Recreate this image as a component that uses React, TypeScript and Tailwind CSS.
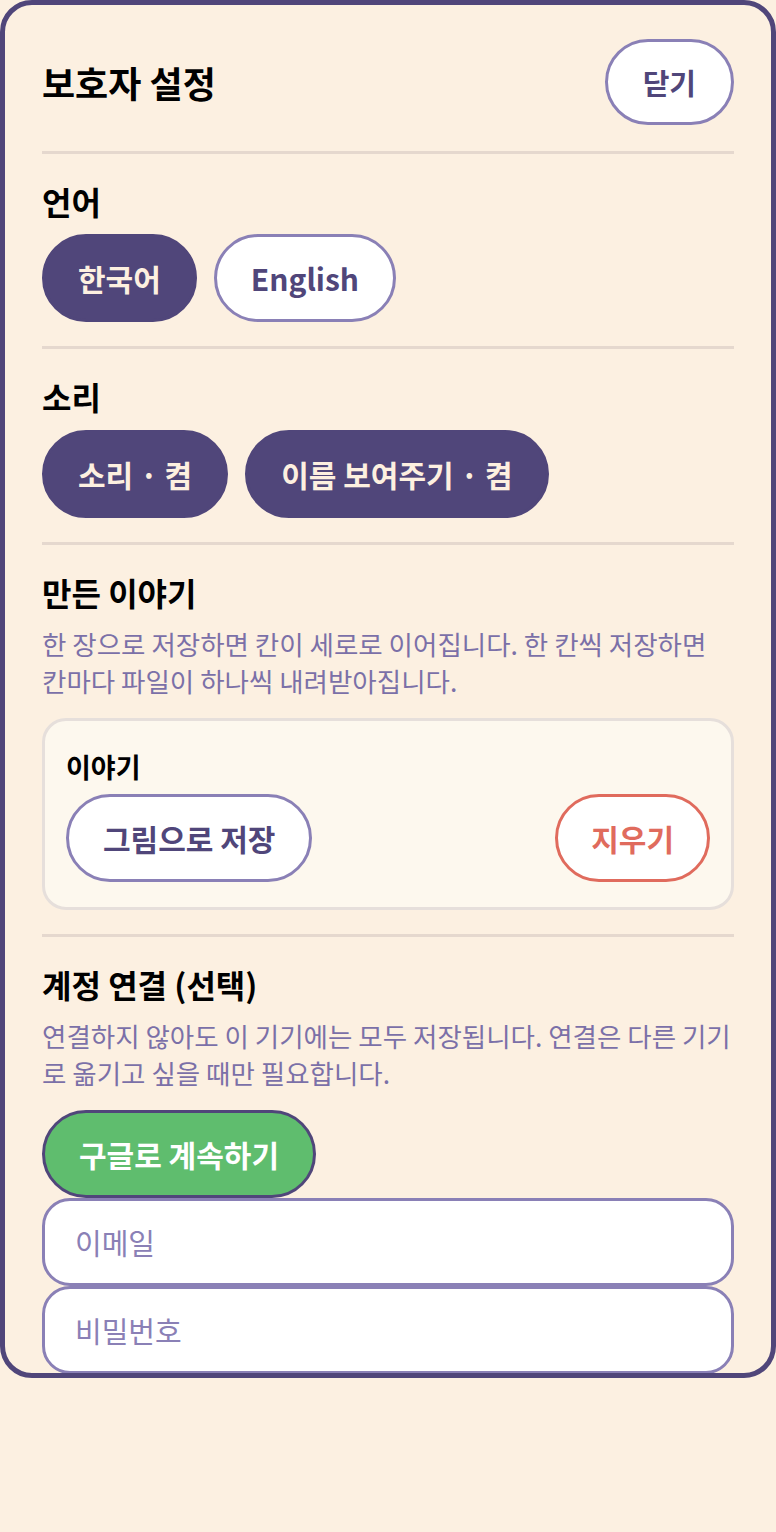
const PillFilled = ({ label }: { label: string }) => (
    <button className="h-[88px] px-[33px] rounded-full border-[3px] border-[#50467a] bg-[#50467a] text-[30px] font-bold text-[#fdf0e0] leading-none whitespace-nowrap">
        {label}
    </button>
);

const PillOutline = ({ label, tone = "purple" }: { label: string; tone?: "purple" | "red" }) => (
    <button
        className={
            tone === "red"
                ? "h-[88px] px-[33px] rounded-full border-[3px] border-[#e06b5d] bg-white text-[30px] font-bold text-[#e06b5d] leading-none whitespace-nowrap"
                : "h-[88px] px-[34px] rounded-full border-[3px] border-[#8a80b6] bg-white text-[30px] font-bold text-[#50467a] leading-none whitespace-nowrap"
        }
    >
        {label}
    </button>
);

const Divider = ({ className = "" }: { className?: string }) => (
    <div className={`h-[3px] bg-[#e5d8ce] ${className}`} />
);

const Heading = ({ children }: { children: string }) => (
    <h2 className="mt-[29px] text-[32px] font-bold leading-[36px] text-black">{children}</h2>
);

const Note = ({ children }: { children: string }) => (
    <p className="mt-[15px] text-[26.5px] leading-[37px] text-[#7b70a8]">{children}</p>
);

export default function App() {
    return (
        <div
            className="min-h-screen bg-[#fcf0e1]"
            style={{ fontFamily: '"Noto Sans CJK KR", "Noto Sans", sans-serif' }}
        >
            <div className="h-[1378px] overflow-hidden rounded-[32px] border-[5px] border-[#50467a] bg-[#fcf0e1] px-[37px] pt-[34px]">
                {/* header */}
                <div className="flex items-center justify-between">
                    <h1 className="text-[36px] font-bold leading-none text-black">보호자 설정</h1>
                    <button className="h-[86px] px-[35px] rounded-full border-[3px] border-[#8a80b6] bg-white text-[29px] font-bold text-[#50467a] leading-none">
                        닫기
                    </button>
                </div>
                <Divider className="mt-[26px]" />

                {/* language */}
                <Heading>언어</Heading>
                <div className="mt-[15px] flex gap-[17px]">
                    <PillFilled label="한국어" />
                    <PillOutline label="English" />
                </div>
                <Divider className="mt-[24px]" />

                {/* sound */}
                <Heading>소리</Heading>
                <div className="mt-[16px] flex gap-[17px]">
                    <PillFilled label="소리 · 켬" />
                    <PillFilled label="이름 보여주기 · 켬" />
                </div>
                <Divider className="mt-[24px]" />

                {/* stories */}
                <Heading>만든 이야기</Heading>
                <Note>한 장으로 저장하면 칸이 세로로 이어집니다. 한 칸씩 저장하면 칸마다 파일이 하나씩 내려받아집니다.</Note>
                <div className="mt-[19px] rounded-[24px] border-[3px] border-[#e6dfdb] bg-[#fdf8ee] px-[21px] pt-[30px] pb-[25px]">
                    <h3 className="text-[27px] font-bold leading-[32px] text-black">이야기</h3>
                    <div className="mt-[11px] flex items-center justify-between">
                        <PillOutline label="그림으로 저장" />
                        <PillOutline label="지우기" tone="red" />
                    </div>
                </div>
                <Divider className="mt-[24px]" />

                {/* account */}
                <Heading>계정 연결 (선택)</Heading>
                <Note>연결하지 않아도 이 기기에는 모두 저장됩니다. 연결은 다른 기기로 옮기고 싶을 때만 필요합니다.</Note>
                <div className="mt-[19px]">
                    <button className="h-[88px] px-[34px] rounded-full border-[3px] border-[#50467a] bg-[#5fbd6e] text-[30px] font-bold text-white leading-none whitespace-nowrap">
                        구글로 계속하기
                    </button>
                </div>
                <div className="flex flex-col">
                    <input
                        type="email"
                        placeholder="이메일"
                        className="h-[88px] w-full rounded-[28px] border-[3px] border-[#8a80b6] bg-white px-[30px] text-[29px] text-[#50467a] outline-none placeholder:text-[#8a80b6]"
                    />
                    <input
                        type="password"
                        placeholder="비밀번호"
                        className="h-[88px] w-full rounded-[28px] border-[3px] border-[#8a80b6] bg-white px-[30px] text-[29px] text-[#50467a] outline-none placeholder:text-[#8a80b6]"
                    />
                </div>
            </div>
        </div>
    );
}
